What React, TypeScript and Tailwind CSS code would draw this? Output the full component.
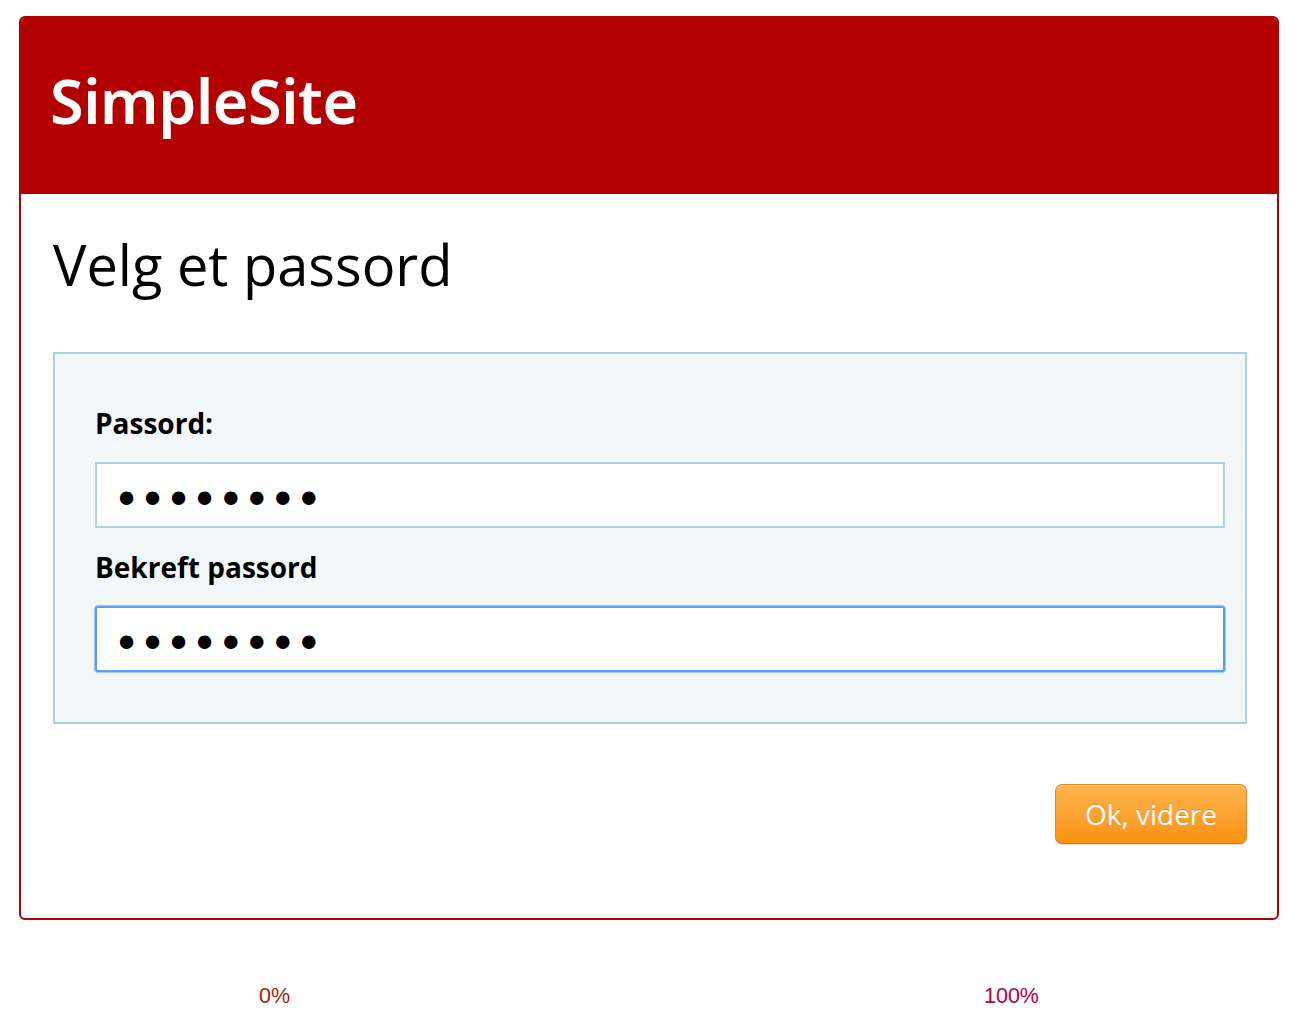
const openSans = "font-['Open_Sans',sans-serif]";

function PasswordField({ label, focused }: { label: string; focused?: boolean }) {
  return (
    <div>
      <label className="block h-[44px] text-[28px] leading-[42px] font-bold text-black">{label}</label>
      <input
        type="password"
        readOnly
        defaultValue="abcdefgh"
        className={`mt-[16px] block h-[66px] w-full border-2 bg-white pt-[10px] pl-[16px] font-['DejaVu_Sans',sans-serif] text-[46px] tracking-[-1.1px] text-black outline-none ${
          focused ? 'rounded-[3px] border-[#5b9bfa] shadow-[0_0_0_1px_#5b9bfa80]' : 'border-[#b0d0e5]'
        }`}
      />
    </div>
  );
}

export default function App() {
  return (
    <div className={`h-[1021px] overflow-hidden bg-white pt-[16px] pl-[19px] ${openSans}`}>
      <div className="h-[904px] w-[1260px] overflow-hidden rounded-[6px] border-2 border-[#b30000] bg-white">
        <div className="flex h-[176px] items-center bg-[#b30000] pl-[29px]">
          <span className="pb-[12px] font-['Noto_Sans',sans-serif] text-[61px] leading-none font-semibold tracking-[-0.4px] text-white blur-[0.6px]">
            SimpleSite
          </span>
        </div>

        <div className="pr-[30px] pl-[32px]">
          <h1 className="mt-[28px] h-[84px] text-[56px] leading-[84px] font-normal text-black">Velg et passord</h1>

          <div className="mt-[46px] h-[372px] border-2 border-[#b0d0e5] bg-[#f2f7fa] pt-[48px] pr-[20px] pl-[40px]">
            <PasswordField label="Passord:" />
            <div className="mt-[18px]">
              <PasswordField label="Bekreft passord" focused />
            </div>
          </div>

          <div className="mt-[60px] flex justify-end">
            <button className="h-[60px] w-[192px] rounded-[7px] border border-[#d98e23] border-b-[#c07f25] bg-gradient-to-b from-[#fdb44c] to-[#fa9208] text-[28px] text-white shadow-[inset_0_1px_0_rgba(255,255,255,0.25),0_1px_1px_rgba(0,0,0,0.15)] [text-shadow:0_-1px_0_rgba(0,0,0,0.15)]">
              Ok, videre
            </button>
          </div>
        </div>
      </div>

      <div className="mt-[63px] flex w-[1020px] justify-between pl-[240px] font-['Liberation_Sans',sans-serif] text-[21.5px] leading-[26px]">
        <span className="text-[#a81c10]">0%</span>
        <span className="text-[#b3003c]">100%</span>
      </div>
    </div>
  );
}
